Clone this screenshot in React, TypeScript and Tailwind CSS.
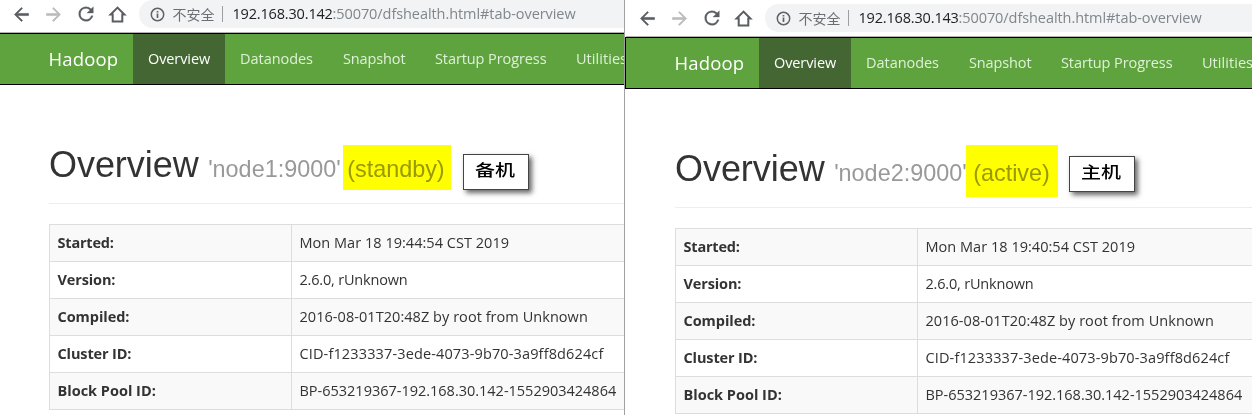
type Row = { label: string; labelClass: string; value: string; valueClass: string };

type PaneProps = {
  host: string;
  started: string;
  node: string;
  state: string;
  highlightClass: string;
  noteClass: string;
  note: string;
};

const links = [
  { text: 'Datanodes', box: 'w-[103px]', spacing: 'tracking-[-0.04px]' },
  { text: 'Snapshot', box: 'w-[92px]', spacing: 'tracking-[-0.12px]' },
  { text: 'Startup Progress', box: 'w-[141px]', spacing: 'tracking-[-0.09px]' },
  { text: 'Utilities', box: 'w-[90px]', spacing: 'tracking-[0.05px]' },
];

function rowsFor(started: string): Row[] {
  return [
    { label: 'Started:', labelClass: 'tracking-[-0.2px]', value: started, valueClass: 'tracking-[0.03px]' },
    { label: 'Version:', labelClass: 'tracking-[-0.12px]', value: '2.6.0, rUnknown', valueClass: 'tracking-[-0.19px]' },
    {
      label: 'Compiled:',
      labelClass: 'tracking-[-0.05px]',
      value: '2016-08-01T20:48Z by root from Unknown',
      valueClass: 'tracking-[0.05px]',
    },
    {
      label: 'Cluster ID:',
      labelClass: 'tracking-[-0.13px]',
      value: 'CID-f1233337-3ede-4073-9b70-3a9ff8d624cf',
      valueClass: 'tracking-[0.135px]',
    },
    {
      label: 'Block Pool ID:',
      labelClass: 'tracking-[0px]',
      value: 'BP-653219367-192.168.30.142-1552903424864',
      valueClass: 'tracking-[-0.01px]',
    },
  ];
}

function Toolbar({ host }: { host: string }) {
  return (
    <div className="flex h-8 shrink-0 items-start overflow-hidden bg-white">
      <div className="flex h-7 w-[139px] shrink-0 items-center gap-[11px] pl-[10.5px] text-[#5a5d61]">
        <svg className="size-[21px] shrink-0" viewBox="0 0 24 24" fill="currentColor">
          <path d="M20 10.8H7.3l5.8-5.7L11.9 4l-8 8 8 8 1.3-1.2-5.9-5.6H20z" stroke="currentColor" strokeWidth="0.7" />
        </svg>
        <svg className="size-[21px] shrink-0 text-[#b9bbbd]" viewBox="0 0 24 24" fill="currentColor">
          <path d="M4 10.8h12.7l-5.8-5.7L12.1 4l8 8-8 8-1.3-1.2 5.9-5.6H4z" stroke="currentColor" strokeWidth="0.7" />
        </svg>
        <svg className="size-[22px] shrink-0" viewBox="0 0 24 24" fill="currentColor">
          <path
            d="M17.65 6.35A7.96 7.96 0 0 0 12 4a8 8 0 1 0 7.73 10h-2.08A6 6 0 1 1 12 6c1.66 0 3.14.69 4.22 1.78L13 11h7V4z"
            stroke="currentColor"
            strokeWidth="0.3"
          />
        </svg>
        <svg className="-ml-[0.5px] size-[21px] shrink-0" viewBox="0 0 21 21" fill="none" stroke="currentColor" strokeWidth="2">
          <path d="M10.5 3.6 3.6 10.5H5.7V17.6H15.3V10.5H17.4Z" />
        </svg>
      </div>
      <div className="flex h-7 flex-1 items-center overflow-hidden whitespace-nowrap rounded-l-full bg-[#f1f3f4] pl-[10.5px]">
        <svg className="size-[15px] shrink-0 text-[#5f6368]" viewBox="0 0 15 15" fill="none" stroke="currentColor">
          <circle cx="7.5" cy="7.5" r="6.2" strokeWidth="1.5" />
          <path d="M7.5 6.6V11M7.5 3.9V5.4" strokeWidth="1.7" />
        </svg>
        <span className="ml-2 shrink-0 font-['Noto_Sans_CJK_SC',sans-serif] text-[14px] leading-[26px] text-[#6b6f74]">
          不安全
        </span>
        <span className="ml-[7px] h-4 w-px shrink-0 bg-[#9a9da1]" />
        <span className="ml-[10px] flex shrink-0 text-[14.5px] leading-7">
          <span className="w-[100px] tracking-[-0.17px] text-[#202124]">{host}</span>
          <span className="tracking-[-0.07px] text-[#80868b]">:50070/dfshealth.html#tab-overview</span>
        </span>
      </div>
    </div>
  );
}

function NavBar() {
  return (
    <nav className="flex h-[52px] shrink-0 overflow-hidden whitespace-nowrap border-y border-black bg-[#5fa33e] text-[14.5px] leading-[50px] text-[#dff0d8]">
      <span className="w-[133px] shrink-0 pl-[48.5px] text-[18.5px] tracking-[0.15px] text-white">Hadoop</span>
      <span className="w-[92px] shrink-0 bg-[#446633] pl-[15px] tracking-[-0.1px] text-white">Overview</span>
      {links.map((l) => (
        <span key={l.text} className={`shrink-0 pl-[15px] ${l.box} ${l.spacing}`}>
          {l.text}
        </span>
      ))}
    </nav>
  );
}

function Pane({ host, started, node, state, highlightClass, noteClass, note }: PaneProps) {
  return (
    <section className="relative flex min-w-0 flex-1 flex-col overflow-hidden bg-white font-['Open_Sans',sans-serif] text-[#333]">
      <Toolbar host={host} />
      <div className="h-px shrink-0 bg-[#b4b0b4]" />
      <NavBar />
      <div className="flex shrink-0 flex-col pl-[49px]">
        <h1 className="flex h-[119px] items-end whitespace-nowrap border-b border-[#eee] pb-[18px] font-['Liberation_Sans',sans-serif] text-[36px] leading-[40px]">
          <span className="tracking-[-0.05px]">Overview</span>
          <small className="-mb-[2px] ml-[9.5px] text-[23.4px] leading-[35px] text-[#999]">
            {node} {state}
          </small>
        </h1>
        <div className="mt-5 w-[1000px] border-l border-t border-[#ddd] text-[14.5px]">
          {rowsFor(started).map((r) => (
            <div key={r.label} className="flex h-[37px] whitespace-nowrap border-b border-[#ddd] leading-[36px] odd:bg-[#f9f9f9]">
              <div className={`w-[242px] shrink-0 border-r border-[#ddd] pl-[7.5px] font-bold ${r.labelClass}`}>{r.label}</div>
              <div className={`pl-[7.5px] ${r.valueClass}`}>{r.value}</div>
            </div>
          ))}
        </div>
      </div>
      <div className={`absolute bg-[#ff0] mix-blend-multiply ${highlightClass}`} />
      <div
        className={`absolute flex h-9 w-[66px] items-center justify-center border border-[#444] bg-white shadow-[3px_3px_5px_rgba(0,0,0,0.6)] ${noteClass}`}
      >
        <span className="-ml-px scale-x-[1.25] pb-[6px] font-['Noto_Sans_CJK_SC',sans-serif] text-[16px] font-medium leading-none text-black">
          {note}
        </span>
      </div>
    </section>
  );
}

export default function App() {
  return (
    <main className="flex h-[415px] w-[1252px] overflow-hidden bg-white">
      <div className="flex w-[624px] shrink-0">
        <Pane
          host="192.168.30.142"
          started="Mon Mar 18 19:44:54 CST 2019"
          node="'node1:9000'"
          state="(standby)"
          highlightClass="left-[343px] top-[145px] h-[45px] w-[108px]"
          noteClass="left-[463px] top-[154px]"
          note="备机"
        />
      </div>
      <div className="w-px shrink-0 bg-[#a0a0a0]" />
      <div className="flex w-px shrink-0 flex-col">
        <div className="mt-[37px] h-[52px] bg-black" />
      </div>
      <div className="flex min-w-0 flex-1 pt-1">
        <Pane
          host="192.168.30.143"
          started="Mon Mar 18 19:40:54 CST 2019"
          node="'node2:9000'"
          state="(active)"
          highlightClass="left-[340px] top-[141px] h-[52px] w-[92px]"
          noteClass="left-[443px] top-[152px]"
          note="主机"
        />
      </div>
    </main>
  );
}
